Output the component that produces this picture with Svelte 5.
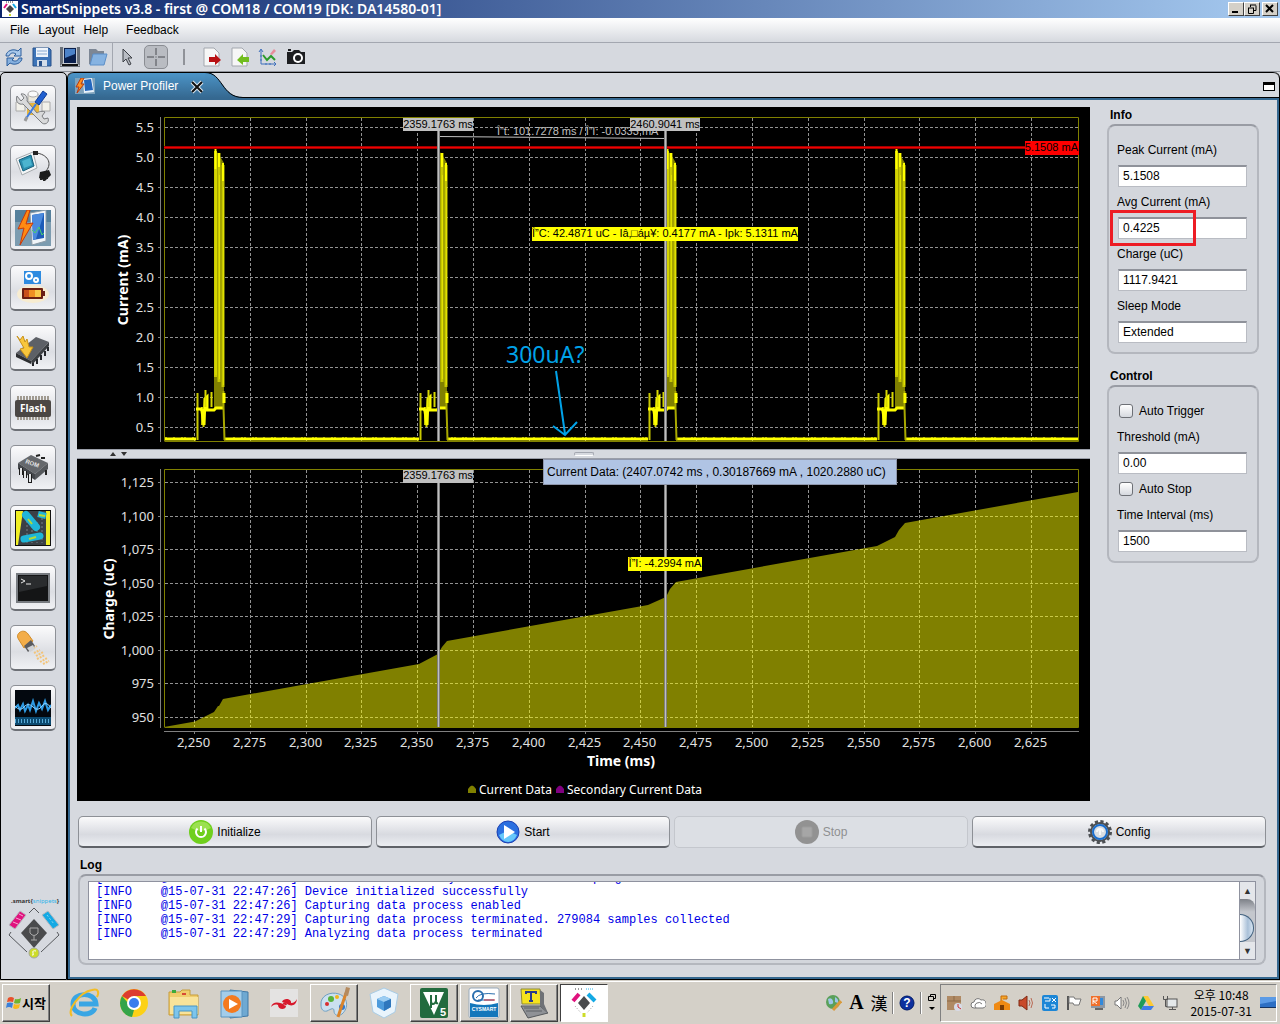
<script lang="ts">
    type Field = { id: string; label: string; value: string };

    const menus = ["File", "Layout", "Help"];
    const tools = ["refresh", "save", "screen", "folder"];
    const chartTools = ["cursor", "crosshair", "line", "export", "import", "axes", "camera"];
    const views = ["settings", "board", "profiler", "battery", "program", "flash", "rom", "cables", "terminal", "usb", "signal"];

    const infoFields: Field[] = [
        { id: "peak", label: "Peak Current (mA)", value: "5.1508" },
        { id: "avg", label: "Avg Current (mA)", value: "0.4225" },
        { id: "charge", label: "Charge (uC)", value: "1117.9421" },
        { id: "sleep", label: "Sleep Mode", value: "Extended" },
    ];

    const actions = [
        { icon: "power", label: "Initialize", disabled: false },
        { icon: "play", label: "Start", disabled: false },
        { icon: "stop", label: "Stop", disabled: true },
        { icon: "gear", label: "Config", disabled: false },
    ];

    const logLines = [
        "[INFO    @15-07-31 22:47:25] Device initialized by the board default program",
        "[INFO    @15-07-31 22:47:26] Device initialized successfully",
        "[INFO    @15-07-31 22:47:26] Capturing data process enabled",
        "[INFO    @15-07-31 22:47:29] Capturing data process terminated. 279084 samples collected",
        "[INFO    @15-07-31 22:47:29] Analyzing data process terminated",
    ];

    const apps = [
        { name: "ie", open: false },
        { name: "chrome", open: false },
        { name: "explorer", open: false },
        { name: "media", open: false },
        { name: "silabs", open: false },
        { name: "paint", open: true },
        { name: "cube", open: false },
        { name: "uvision", open: true },
        { name: "cysmart", open: true },
        { name: "teraterm", open: true },
        { name: "snippets", open: true },
    ];
    const tray = ["package", "cloud", "school", "speaker", "transfer", "flag", "monitor", "volume", "drive", "network"];

    // Time axis, shared by both charts
    const times = Array.from({ length: 16 }, (_, i) => 2250 + i * 25);
    const timeX = (t: number) => Math.round(117 + (t - 2250) * 2.232) + 0.5;

    const currents = Array.from({ length: 11 }, (_, i) => 0.5 + i * 0.5);
    const currentY = (v: number) => Math.round(50 + (5 - v) * 60.1) + 0.5;

    const charges = Array.from({ length: 8 }, (_, i) => 950 + i * 25);
    const chargeY = (v: number) => Math.round(23 + (1125 - v) * 1.343) + 0.5;

    const markers = [
        { x: 361, label: "2359.1763 ms" },
        { x: 588, label: "2460.9041 ms" },
    ];

    // Left edge of each radio event
    const pulses = [119, 342, 571, 800];

    // Small ticks on the sleep current floor
    const floorNoise = Array.from({ length: 150 }, (_, i) => 88 + i * 6 + ((i * 7) % 5)).filter(
        (x) => !pulses.some((p) => x > p - 2 && x < p + 30)
    );

    const floorPath = (() => {
        let path = "M88 332";
        for (const p of pulses) {
            path += `H${p}M${p + 28} 332`;
        }
        return path + "H1001";
    })();

    const chargeArea =
        "M87 268L118 262.500L137 253L141 247L142 247L146 240L342 205L361 195L365 188L370 182L571 146L589 138L593 130L599 123L800 87L818 78L822 71L828 64L1001 33V268Z";

    let autoTrigger = false;
    let autoStop = false;
    let threshold = "0.00";
    let interval = "1500";
</script>

{#snippet toolIcon(name: string)}
    <svg width="20" height="20" viewBox="0 0 20 20" aria-hidden="true">
        {#if name === "refresh"}
            <path d="M2 9C2 4 9 1 14 4L17 1V9H10L12 7C9 5 6 6 5 9Z" fill="#a9c8ea" stroke="#2c5f9e" />
            <path d="M18 11C18 16 11 19 6 16L3 19V11H10L8 13C11 15 14 14 15 11Z" fill="#86b0de" stroke="#2c5f9e" />
        {:else if name === "save"}
            <path d="M1 1H17L19 3V19H1Z" fill="#3d74b8" stroke="#27508a" />
            <rect x="4" y="1" width="12" height="9" fill="#eef4fb" />
            <path d="M5 4H15M5 7H15" stroke="#86a9d2" />
            <rect x="5" y="13" width="10" height="6" fill="#d4dde9" />
            <rect x="7" y="14" width="3" height="5" fill="#27508a" />
        {:else if name === "screen"}
            <rect x="0" y="0" width="20" height="20" fill="#6b717a" />
            <path d="M3 0H17V16L20 19H0L3 16Z" fill="#c7ccd3" />
            <rect x="4" y="1" width="12" height="15" fill="#0a1f4c" />
            <path d="M5 2H15V7L5 11Z" fill="#4c82c8" />
            <path d="M2 18H18" stroke="#111" stroke-width="2" />
        {:else if name === "folder"}
            <path d="M1 2H8L10 4H16V17H1Z" fill="#7d8795" />
            <path d="M5 7H19L16 18H2Z" fill="#86b3e2" stroke="#5c8fc8" />
        {:else if name === "cursor"}
            <path d="M5 2V15L8 12L11 18L13 17L10 11H14Z" fill="#b9bdc4" stroke="#3b3e44" />
        {:else if name === "crosshair"}
            <path d="M10 1V8M10 12V19M1 10H8M12 10H19M10 9.500V10.500" stroke="#4a4d53" />
        {:else if name === "line"}
            <path d="M10 2V18" stroke="#4a4d53" />
        {:else if name === "export"}
            <path d="M2 1H12L17 6V19H2Z" fill="#f6f6f6" stroke="#a3a7ae" />
            <path d="M7 10H13V7L19 13L13 18V15H7Z" fill="#b80f12" />
        {:else if name === "import"}
            <path d="M2 1H12L17 6V19H2Z" fill="#f6f6f6" stroke="#a3a7ae" />
            <path d="M19 10H13V7L7 13L13 18V15H19Z" fill="#71bd1e" />
        {:else if name === "axes"}
            <path d="M3 3V17H18M1 5L3 2L5 5M16 15L18 17L16 19M2 9H4M2 13H4M8 16V18M12 16V18" fill="none" stroke="#3f70bb" />
            <path d="M5 8L9 13L13 9L17 13" fill="none" stroke="#2b9b2b" stroke-width="2" />
            <path d="M12 7L16 2L18 4L14 8Z" fill="#e88b9a" />
        {:else if name === "camera"}
            <path d="M1 5H6L8 3H13L15 5H19V17H1Z" fill="#1d1e21" />
            <circle cx="12" cy="11" r="5" fill="#fff" />
            <circle cx="12" cy="11" r="3" fill="#1d1e21" />
            <path d="M2 3H5M1 8H6" stroke="#1d1e21" stroke-width="2" />
        {/if}
    </svg>
{/snippet}

{#snippet viewIcon(name: string)}
    <svg width="36" height="36" viewBox="0 0 36 36" aria-hidden="true">
        {#if name === "settings"}
            <path d="M12 13H24V25H12Z" fill="#e7b63d" />
            <path d="M13 4V12H23V4" fill="#ece9dc" stroke="#aaa" />
            <ellipse cx="18" cy="4" rx="5" ry="3" fill="#fafafa" stroke="#aaa" />
            <path d="M1 12H10V21H1ZM27 12H35V21H27Z" fill="#f2f1ea" stroke="#aaa" />
            <path d="M2 6C0 12 4 15 8 14L26 32C29 36 35 33 33 28L29 29L27 26L30 22C26 20 22 23 22 23L12 11C13 7 10 3 6 4L9 8L6 11Z" fill="#d9dadb" stroke="#7b7d80" />
            <path d="M28 1L32 4L24 15L20 12Z" fill="#1f5fd0" stroke="#0d3c96" />
            <path d="M21 14L10 30" stroke="#3c7be0" stroke-width="2" />
            <path d="M12 27L10 31" stroke="#999" stroke-width="3" />
        {:else if name === "board"}
            <path d="M1 9L18 2L22 18L7 25Z" fill="#f3f5f6" stroke="#a5aaae" />
            <path d="M4 10L16 5L19 16L8 21Z" fill="#2b8fb0" stroke="#15607c" />
            <path d="M7 11L15 8L17 15L9 18Z" fill="#4cb4cf" />
            <path d="M21 3C32 4 38 13 31 21" fill="none" stroke="#444" />
            <path d="M18 1H23V5H18Z" fill="#222" />
            <path d="M25 22L34 20L36 25L30 31L24 28Z" fill="#1b1b1b" />
            <path d="M26 28V30M29 29V31M32 27V29" stroke="#222" stroke-width="2" />
        {:else if name === "profiler"}
            <rect x="0" y="0" width="36" height="36" fill="#7c9cb0" />
            <rect x="0" y="0" width="36" height="12" fill="#55809c" />
            <path d="M15 3L31 0L31 31L17 35Z" fill="#f1f5f8" stroke="#8b9aa6" />
            <path d="M17 5L29 3L29 28L18 30Z" fill="#1d5cb8" />
            <path d="M17 5L29 3L21 29L18 30Z" fill="#4a8add" />
            <path d="M17 20L20 23L24 17L27 25L29 23" fill="none" stroke="#4ad36a" />
            <path d="M12 0L3 19L9 18L5 35L18 13L11 14L15 0Z" fill="#ff8a13" stroke="#c8390c" />
        {:else if name === "battery"}
            <rect x="9" y="1" width="17" height="13" fill="#2e8be0" />
            <circle cx="14" cy="6" r="3" fill="none" stroke="#fff" stroke-width="2" />
            <circle cx="21" cy="10" r="2" fill="none" stroke="#fff" stroke-width="2" />
            <ellipse cx="18" cy="24" rx="16" ry="9" fill="#f7ecd0" />
            <rect x="7" y="18" width="21" height="11" rx="1" fill="#6b1f13" />
            <rect x="9" y="20" width="5" height="7" fill="#c9501b" />
            <rect x="14" y="20" width="6" height="7" fill="#ef8f24" />
            <rect x="20" y="20" width="6" height="7" fill="#f8c84a" />
            <rect x="28" y="21" width="2" height="5" fill="#6b1f13" />
        {:else if name === "program"}
            <path d="M1 23L21 7L34 12L16 31Z" fill="#5d6066" />
            <path d="M1 23L16 31V34L1 27Z" fill="#2c2e31" />
            <path d="M16 31L34 12V16L17 35Z" fill="#3d4044" />
            <path d="M18 33V36M22 29V34M26 25V30M30 21V26M33 17V21" stroke="#24262a" stroke-width="2" />
            <path d="M2 6L5 10L8 6L10 12L12 9L14 17L18 17L12 28L5 19L9 18Z" fill="#f8c63c" stroke="#c9921a" />
        {:else if name === "flash"}
            <path d="M2 8H34M2 28H34" stroke="#a09a90" stroke-width="4" stroke-dasharray="2 1" />
            <rect x="0" y="10" width="36" height="17" rx="2" fill="#4b4744" />
            <text x="18" y="22" text-anchor="middle" class="flash-text">Flash</text>
        {:else if name === "rom"}
            <path d="M3 13L16 5L33 13L20 24Z" fill="#65686c" />
            <path d="M3 13L20 24V30L3 19Z" fill="#44474b" />
            <path d="M20 24L33 13V19L20 30Z" fill="#55585c" />
            <path d="M6 18V25M10 21V28M15 24V33" stroke="#1c1c1c" stroke-width="4" />
            <path d="M6 18V25M10 21V28M15 24V32" stroke="#e4e6e8" stroke-width="2" />
            <path d="M21 6L25 5M26 8L30 8M31 20V25" stroke="#222" stroke-width="2" />
            <text x="10" y="13" transform="rotate(20 10 13)" class="rom-text">ROM</text>
        {:else if name === "cables"}
            <rect x="0" y="0" width="36" height="36" fill="#111" />
            <rect x="1" y="1" width="34" height="34" fill="#f0ee25" />
            <path d="M8 1H31V35H3Z" fill="#3b4046" />
            <path d="M12 3V33M17 8V33M22 12V33M27 4V33" stroke="#777f87" stroke-dasharray="2 2" />
            <path d="M11 5L21 17" stroke="#1fb6d8" stroke-width="8" stroke-linecap="round" />
            <path d="M23 4L31 6" stroke="#1fb6d8" stroke-width="6" />
            <path d="M9 29L25 26" stroke="#1fb6d8" stroke-width="7" stroke-linecap="round" />
            <path d="M13 9L17 14M24 5L30 6M14 29L21 27" stroke="#b6d936" stroke-width="2" />
        {:else if name === "terminal"}
            <rect x="1" y="3" width="34" height="30" fill="#777b80" />
            <rect x="3" y="5" width="30" height="26" fill="#141516" />
            <path d="M4 6H32V16L4 22Z" fill="#2a2c2e" />
            <path d="M6 9L10 11L6 13M11 14H16" fill="none" stroke="#e8e8e8" />
        {:else if name === "usb"}
            <path d="M16 20L22 16M19 23L25 20M21 26L28 22M22 29L30 25M25 32L32 28M28 34L34 31" stroke="#f3c479" stroke-width="2" stroke-dasharray="2 1" />
            <path d="M4 3C7 0 11 1 13 4L18 11L9 18L4 10C2 7 2 5 4 3Z" fill="#f3ad48" stroke="#d08c2a" />
            <path d="M9 16L16 10L20 16L13 22Z" fill="#5b5c5f" />
            <path d="M12 18L18 15L20 19L15 22Z" fill="#d0d2d4" />
        {:else if name === "signal"}
            <rect x="0" y="0" width="36" height="36" fill="#03080f" />
            <rect x="0" y="27" width="36" height="8" fill="#0c4a70" />
            <path d="M0 31H36" stroke="#57a9d6" stroke-width="4" stroke-dasharray="1 2" />
            <path d="M0 18L3 15L5 20L8 14L10 21L13 15L15 20L18 11L21 21L24 13L27 19L30 11L33 20L36 15" fill="none" stroke="#2e9be4" stroke-width="2" />
            <path d="M0 16Q5 22 9 17T18 17T27 16T36 18" fill="none" stroke="#8fd2ff" />
        {/if}
    </svg>
{/snippet}

{#snippet actionIcon(name: string)}
    <svg width="24" height="24" viewBox="0 0 24 24" aria-hidden="true">
        {#if name === "power"}
            <circle cx="12" cy="12" r="12" fill="#6fcf1d" />
            <path d="M2 8A11 11 0 0 1 22 8Q12 14 2 8Z" fill="#9be050" />
            <path d="M8.500 8.500A5 5 0 1 0 15.500 8.500M12 6V12" fill="none" stroke="#fff" stroke-width="2" />
        {:else if name === "play"}
            <circle cx="12" cy="12" r="11" fill="#2a6fe0" stroke="#1c3fb0" />
            <path d="M3 15Q12 9 21 15Q18 22 12 22T3 15Z" fill="#66c8fa" />
            <path d="M8 5L19 12L8 19Z" fill="#fff" />
        {:else if name === "stop"}
            <circle cx="12" cy="12" r="12" fill="#929292" />
            <rect x="7" y="7" width="10" height="10" rx="1" fill="#a6a6a6" stroke="#9c9c9c" />
        {:else if name === "gear"}
            <circle cx="12" cy="12" r="10" fill="none" stroke="#4d5054" stroke-width="4" stroke-dasharray="3 2.240" />
            <circle cx="12" cy="12" r="9" fill="none" stroke="#4d5054" stroke-width="2" />
            <circle cx="12" cy="12" r="7" fill="#d9dde2" stroke="#1a6fd0" stroke-width="2" />
            <path d="M9 12A3 3 0 0 1 15 12M12 9V15" fill="none" stroke="#f6f8fa" stroke-width="2" />
        {/if}
    </svg>
{/snippet}

{#snippet appIcon(name: string)}
    <svg width="32" height="32" viewBox="0 0 32 32" aria-hidden="true">
        {#if name === "ie"}
            <path d="M27 21C24 30 5 29 5 17C5 5 27 4 28 17H11" fill="none" stroke="#3aa6e4" stroke-width="5" />
            <path d="M4 29C-2 24 12 5 24 3C31 1 31 6 29 10" fill="none" stroke="#f3bd24" stroke-width="2" />
        {:else if name === "chrome"}
            <circle cx="16" cy="16" r="14" fill="#fcd116" />
            <path d="M16 16L4 9A14 14 0 0 1 28 9H16Z" fill="#dd3b2e" />
            <path d="M4 9L16 23L14 30A14 14 0 0 1 4 9Z" fill="#35a449" />
            <circle cx="16" cy="16" r="7" fill="#fff" />
            <circle cx="16" cy="16" r="5" fill="#3b7ded" />
        {:else if name === "explorer"}
            <path d="M1 5H12L14 3H22V8H30V28H1Z" fill="#f0cd6c" stroke="#c79d3a" />
            <path d="M4 3H8V6H4Z" fill="#3cab3c" />
            <path d="M14 6H18V8H14Z" fill="#d84a35" />
            <path d="M2 10H30V27H2Z" fill="#f9e399" />
            <path d="M6 19H29V31H24V24H11V31H6Z" fill="#7dc5ec" stroke="#4995c4" />
        {:else if name === "media"}
            <path d="M12 3L30 5V29L12 31Z" fill="#6fa9d2" stroke="#4379a5" />
            <path d="M3 4H24V30H3Z" fill="#a3cdea" stroke="#5a94bf" />
            <circle cx="14" cy="17" r="9" fill="#f47a1f" />
            <path d="M11 12L20 17L11 22Z" fill="#fff" />
        {:else if name === "silabs"}
            <rect x="2" y="2" width="28" height="28" fill="#e4e3e2" />
            <path d="M3 20C5 13 13 16 17 18C20 19 20 16 14 15C16 10 24 12 23 16C26 16 28 14 29 12C28 20 22 19 19 17C15 14 13 17 18 19C18 23 10 23 10 18C7 17 5 18 3 20Z" fill="#d7192c" />
        {:else if name === "paint"}
            <path d="M3 18C2 9 12 4 21 7C30 10 31 21 24 27C20 30 16 28 16 24C16 20 13 22 9 24C5 25 3 22 3 18Z" fill="#cbe0ef" stroke="#6f9fc2" />
            <circle cx="9" cy="17" r="2" fill="#d92f2f" />
            <circle cx="13" cy="12" r="3" fill="#58b23b" />
            <circle cx="19" cy="10" r="2" fill="#f3b41c" />
            <circle cx="24" cy="20" r="3" fill="#2e78cf" />
            <path d="M28 6L20 30" stroke="#d9842c" stroke-width="3" />
            <path d="M26 8L28 0L32 1L30 9Z" fill="#b58a5e" />
        {:else if name === "cube"}
            <path d="M16 1L30 7L27 25L16 31L5 25L2 7Z" fill="#e9f4fc" stroke="#a9cce5" />
            <path d="M16 9L23 12V20L16 24L9 20V12Z" fill="#4d9bdc" />
            <path d="M9 12L16 15L23 12L16 9Z" fill="#9ccdf2" />
            <path d="M16 15V24L23 20V12Z" fill="#2f77bd" />
        {:else if name === "uvision"}
            <rect x="2" y="1" width="28" height="30" rx="2" fill="#226b3e" />
            <path d="M5 5H26L16 28Z" fill="#fff" />
            <path d="M13 8V14Q13 17 15 17T18 14V8M18 14Q18 17 20 16M13 15V21" fill="none" stroke="#226b3e" stroke-width="2" />
            <text x="22" y="29" class="app-digit">5</text>
        {:else if name === "cysmart"}
            <rect x="1" y="1" width="30" height="30" rx="2" fill="#fff" stroke="#9ab" />
            <path d="M2 16Q16 20 30 16V30H2Z" fill="#1477bb" />
            <ellipse cx="10" cy="9" rx="5" ry="5" fill="none" stroke="#2a6fae" stroke-width="2" />
            <path d="M8 11Q12 5 27 7M10 13H26" fill="none" stroke="#2a6fae" />
            <path d="M16 13H27" fill="none" stroke="#d7282f" />
            <text x="16" y="24" text-anchor="middle" class="app-name">CYSMART</text>
        {:else if name === "teraterm"}
            <path d="M3 2H22L23 17H4Z" fill="#f5e21d" stroke="#8d8a3a" />
            <path d="M8 7V5H18V7M13 5V14M11 14H15" fill="none" stroke="#2a3a8c" stroke-width="2" />
            <path d="M3 19H22L30 26L10 31Z" fill="#8f9296" stroke="#55585c" />
            <path d="M6 21H21M8 24H24" stroke="#5f6266" />
            <path d="M22 3L26 6V17L30 26L22 19Z" fill="#6f7276" />
        {:else if name === "snippets"}
            <path d="M7 2H15" stroke="#333" stroke-dasharray="1 2" />
            <path d="M18 2H26" stroke="#2bb4ea" stroke-dasharray="1 1" />
            <path d="M10 16L16 9L22 16L16 23Z" fill="#4a4b4d" />
            <path d="M5 14L11 7" stroke="#e0127e" stroke-width="4" />
            <path d="M20 7L27 14" stroke="#14a9e4" stroke-width="4" />
            <path d="M7 19L13 26M25 19L19 26" stroke="#999" stroke-dasharray="1 2" />
            <path d="M16 26V30" stroke="#cddc29" stroke-width="3" />
        {/if}
    </svg>
{/snippet}

{#snippet trayIcon(name: string)}
    <svg width="16" height="16" viewBox="0 0 16 16" aria-hidden="true">
        {#if name === "package"}
            <path d="M1 1H15V15H1Z" fill="#b08a64" />
            <path d="M1 6H15M8 1V6" stroke="#8d6a48" />
            <circle cx="12" cy="12" r="4" fill="#d8dbe8" />
            <path d="M12 9V12L15 14" fill="none" stroke="#c33" />
        {:else if name === "cloud"}
            <path d="M4 13A3 3 0 0 1 4 7A4 4 0 0 1 11 5A4 4 0 0 1 13 13Z" fill="#fff" stroke="#777" />
            <path d="M6 13A3 3 0 0 1 7 8A4 4 0 0 1 12 9" fill="none" stroke="#777" />
        {:else if name === "school"}
            <path d="M0 9L8 5L16 9V15H0Z" fill="#ef8a14" />
            <path d="M7 6V1H13V4H9" fill="#f6a72a" stroke="#c46b08" />
            <path d="M6 15V10H10V15Z" fill="#7a3c05" />
        {:else if name === "speaker"}
            <path d="M1 5H4L9 1V15L4 11H1Z" fill="#c94a2a" stroke="#7e2a14" />
            <path d="M11 5Q13 8 11 11M13 3Q16 8 13 13" fill="none" stroke="#b96a55" />
        {:else if name === "transfer"}
            <rect x="0" y="0" width="16" height="16" rx="2" fill="#1c86d6" />
            <path d="M2 3H7M3 6H8V3M10 3L14 7M14 3L10 7M3 9V13H7M9 10H13V13H10" fill="none" stroke="#fff" />
        {:else if name === "flag"}
            <path d="M2 1V15" stroke="#555" stroke-width="2" />
            <path d="M3 2H8L9 4H15L13 10H8L7 8H3Z" fill="#fff" stroke="#777" />
        {:else if name === "monitor"}
            <rect x="1" y="1" width="14" height="12" fill="#8e98a4" />
            <rect x="1" y="1" width="9" height="10" fill="#f0702c" />
            <path d="M10 3H13V10H10Z" fill="#3189dc" />
            <path d="M3 9V3H7V6H3L7 9" fill="none" stroke="#fff" />
            <path d="M5 14H13" stroke="#666" stroke-width="2" />
        {:else if name === "volume"}
            <path d="M1 6H3L7 2V14L3 10H1Z" fill="#fff" stroke="#777" />
            <path d="M9 5Q11 8 9 11M11 3Q14 8 11 13M13 2Q17 8 13 14" fill="none" stroke="#888" />
        {:else if name === "drive"}
            <path d="M5 1H10L16 11H11Z" fill="#fcc934" />
            <path d="M5 1L8 6L3 15L0 11Z" fill="#1f9c59" />
            <path d="M5 11H16L13 15H3Z" fill="#3f7de8" />
        {:else if name === "network"}
            <rect x="5" y="4" width="10" height="8" fill="#e4e8ea" stroke="#555" />
            <path d="M7 14.500H14M10.500 12V14" stroke="#555" />
            <path d="M1.500 1V4.500H5.500V1M3.500 5V11.500H5" fill="none" stroke="#555" />
        {/if}
    </svg>
{/snippet}

<div class="desktop">
    <header class="title-bar">
        <svg width="16" height="16" viewBox="0 0 16 16" aria-hidden="true">
            <rect width="16" height="16" fill="#fff" />
            <path d="M4 8L8 4L12 8L8 12Z" fill="#444" />
            <path d="M2 7L5 3" stroke="#e0127e" stroke-width="2" />
            <path d="M11 3L14 7" stroke="#14a9e4" stroke-width="2" />
            <path d="M8 13V15" stroke="#cddc29" stroke-width="2" />
            <path d="M4 1H12" stroke="#333" stroke-dasharray="1 1" />
        </svg>
        <h1>SmartSnippets v3.8 - first @ COM18 / COM19 [DK: DA14580-01]</h1>
        <div class="window-buttons">
            <button aria-label="Minimize">
                <svg width="12" height="10" viewBox="0 0 12 10"><path d="M2 8H8" stroke="#000" stroke-width="2" /></svg>
            </button>
            <button aria-label="Restore">
                <svg width="12" height="10" viewBox="0 0 12 10">
                    <path d="M4 1H10M4.500 1V3M10 1.500V6.500H8M2 4H8M2.500 4V9.500H7.500V4" fill="none" stroke="#000" />
                </svg>
            </button>
            <button aria-label="Close" class="close">
                <svg width="12" height="10" viewBox="0 0 12 10"><path d="M2 1L9 8M9 1L2 8" stroke="#000" stroke-width="2" /></svg>
            </button>
        </div>
    </header>

    <nav class="menu-bar">
        {#each menus as item}
            <button>{item}</button>
        {/each}
        <button class="feedback">Feedback</button>
    </nav>

    <div class="toolbar">
        {#each tools as name}
            <button aria-label={name}>{@render toolIcon(name)}</button>
        {/each}
        <span class="divider"></span>
        {#each chartTools as name}
            <button aria-label={name} class:pressed={name === "crosshair"}>{@render toolIcon(name)}</button>
        {/each}
    </div>

    <div class="main">
        <aside class="sidebar">
            {#each views as name}
                <button class="view" aria-label={name}>{@render viewIcon(name)}</button>
            {/each}
            <svg class="logo" width="54" height="64" viewBox="0 0 54 64" aria-hidden="true">
                <text x="4" y="8" class="logo-text">.smart&#123;<tspan class="logo-blue">snippets</tspan>&#125;</text>
                <path d="M27 24L40 38L27 53L14 38Z" fill="#4a4b4d" />
                <path d="M23 33H31V38Q27 43 23 38ZM27 41V45M24 45H30" fill="none" stroke="#aaa" />
                <path d="M2 30L13 16L19 20L8 34Z" fill="#e0127e" stroke="#b5b8be" />
                <path d="M6 27L11 29M9 23L14 25M12 19L16 21" stroke="#f9a5d0" />
                <path d="M35 20L41 16L52 30L46 34Z" fill="#14a9e4" stroke="#b5b8be" />
                <path d="M40 20L47 29" stroke="#86d8f6" stroke-dasharray="2 2" />
                <path d="M22 18L27 13L32 18M4 37L2 40L20 57M50 37L52 40L34 57" fill="none" stroke="#55585c" />
                <circle cx="27" cy="58" r="5" fill="#cddc29" stroke="#a5a8a0" />
                <path d="M29 56Q25 55 26 58T25 60" fill="none" stroke="#fff" />
            </svg>
        </aside>

        <main class="workspace">
            <div class="tabs">
                <div class="tab">
                    <svg width="20" height="16" viewBox="0 0 20 16" aria-hidden="true">
                        <rect width="20" height="16" fill="#7fa3bc" />
                        <path d="M8 1L17 0L19 14L9 15Z" fill="#e9f2fa" />
                        <path d="M9 2L16 1L18 12L10 13Z" fill="#2467bd" />
                        <path d="M6 0L1 9L4 9L2 15L9 6L6 6L9 0Z" fill="#ff9222" stroke="#b93a10" />
                    </svg>
                    <span>Power Profiler</span>
                    <button aria-label="Close tab">
                        <svg width="14" height="14" viewBox="0 0 14 14">
                            <path d="M2 2L12 12M12 2L2 12" stroke="#dce8f2" stroke-width="4" />
                            <path d="M2 2L12 12M12 2L2 12" stroke="#111" stroke-width="2" />
                        </svg>
                    </button>
                </div>
                <svg class="tab-end" width="40" height="26" viewBox="0 0 40 26" aria-hidden="true">
                    <defs>
                        <linearGradient id="tabFill" x2="0" y2="1">
                            <stop offset="0" stop-color="#4c95c8" />
                            <stop offset="1" stop-color="#356890" />
                        </linearGradient>
                    </defs>
                    <path d="M0 0C18 0 16 25 38 25V26H0Z" fill="url(#tabFill)" />
                    <path d="M0 .5C18 .5 16 25.500 38 25.500H40" fill="none" stroke="#000" />
                    <path d="M0 .5H40" stroke="#000" />
                </svg>
                <div class="tab-rest">
                    <button aria-label="Maximize panel"></button>
                </div>
            </div>

            <div class="content">
                <div class="upper">
                    <section class="charts">
                        <svg class="chart" viewBox="0 0 1013 342" role="img" aria-label="Current over time">
                            <g class="grid">
                                {#each times as t}
                                    <path d="M{timeX(t)} 11V334" />
                                {/each}
                                {#each currents as v}
                                    <path d="M88 {currentY(v)}H1001" />
                                {/each}
                            </g>
                            <path class="frame" d="M87.500 334V10.500H1001.500V334.500H87.500" />
                            <path class="axis" d="M83.500 10V335" />
                            {#each currents as v}
                                <path class="axis" d="M81 {currentY(v)}H84" />
                                <text x="77" y={currentY(v) + 4} text-anchor="end" class="tick">{v.toFixed(1)}</text>
                            {/each}
                            <text transform="translate(51 173) rotate(-90)" text-anchor="middle" class="axis-title">Current (mA)</text>

                            <path d={floorPath} stroke="#ff0" stroke-width="3" />
                            {#each floorNoise as x}
                                <rect {x} y="330" width="2" height="1" fill="#c8c800" />
                            {/each}
                            {#each pulses as x}
                                <g transform="translate({x} 0)" fill="none" stroke="#ff0">
                                    <path d="M18 44V302H28V56L22 46Z" fill="#808000" stroke="none" />
                                    <path d="M19.500 44V270M23 46V275M27 58V280" stroke="#c8c800" stroke-width="3" />
                                    <path d="M19.500 42V62M23 46V60M27 56V74" stroke-width="2" />
                                    <path d="M20 62V268M23.500 68V272M27.500 80V278" stroke="#e0e000" />
                                    <path d="M1.500 333V286M6 300V318M7.500 302V320" stroke="#c8c800" stroke-width="2" />
                                    <path d="M0 302H5L6 304L8 318L9 292L11 290V303H18L20 301H27" stroke-width="3" />
                                    <path d="M9.500 283V300M15.500 285V300" stroke-width="2" stroke="#d8d800" />
                                    <path d="M27.500 284V300L28.500 333" stroke="#a8a800" stroke-width="2" />
                                    <path d="M28 286V296" stroke-width="3" />
                                </g>
                            {/each}

                            <path d="M87 40.500H1001" stroke="#a00000" stroke-width="3" />
                            <path d="M87 40.500H1001" stroke="#f00000" />
                            <path d="M362 29.500L588 31.500" stroke="#c0c0c0" />
                            <text x="420" y="28" class="marker light">Î”t: 101.7278 ms / Î”I: -0.0333 mA</text>
                            {#each markers as mark}
                                <path d="M{mark.x + 0.5} 23V334" stroke="#808080" stroke-width="3" />
                                <path d="M{mark.x + 0.5} 23V334" stroke="#c0c0c0" />
                                <rect x={mark.x - 35} y="11" width="70" height="13" fill="#c0c0c0" />
                                <text x={mark.x} y="21" text-anchor="middle" class="marker">{mark.label}</text>
                            {/each}
                            <rect x="948" y="34" width="54" height="14" fill="#f00" />
                            <text x="1001" y="44" text-anchor="end" class="marker">5.1508 mA</text>
                            <rect x="455" y="120" width="266" height="14" fill="#ff0" />
                            <text x="588" y="130" text-anchor="middle" class="marker">Î”C: 42.4871 uC - Iâ‚□áµ¥: 0.4177 mA - Ipk: 5.1311 mA</text>

                            <text x="429" y="256" class="note">300uA?</text>
                            <path d="M479 264L488 327M476 319L488 328L500 315" fill="none" stroke="#00a2e8" stroke-width="2" />
                        </svg>

                        <div class="splitter">
                            <svg width="20" height="6" viewBox="0 0 20 6" aria-hidden="true">
                                <path d="M1 5L4 1L7 5ZM12 1H18L15 5Z" fill="#333" />
                            </svg>
                            <span class="grip"></span>
                        </div>

                        <svg class="chart" viewBox="0 0 1013 342" role="img" aria-label="Charge over time">
                            <g class="grid">
                                {#each times as t}
                                    <path d="M{timeX(t)} 11V268" />
                                {/each}
                                {#each charges as v}
                                    <path d="M88 {chargeY(v)}H1001" />
                                {/each}
                            </g>
                            <path d={chargeArea} fill="#ff0" fill-opacity="0.5" />
                            <path class="frame" d="M87.500 268V10.500H1001.500V268.500H87.500" />
                            <path class="axis" d="M83.500 10V269M87 272.500H1002" />
                            {#each charges as v}
                                <path class="axis" d="M81 {chargeY(v)}H84" />
                                <text x="77" y={chargeY(v) + 4} text-anchor="end" class="tick">{v.toLocaleString("en-US")}</text>
                            {/each}
                            {#each times as t}
                                <path class="axis" d="M{timeX(t)} 272V275" />
                                <text x={timeX(t) - 1} y="288" text-anchor="middle" class="tick">{t.toLocaleString("en-US")}</text>
                            {/each}
                            <text transform="translate(37 140) rotate(-90)" text-anchor="middle" class="axis-title">Charge (uC)</text>
                            <text x="544" y="307" text-anchor="middle" class="axis-title">Time (ms)</text>

                            {#each markers as mark}
                                <path d="M{mark.x + 0.5} 11V268" stroke="#808080" stroke-width="3" />
                                <path d="M{mark.x + 0.5} 11V268" stroke="#c0c0c0" />
                            {/each}
                            <rect x="326" y="11" width="70" height="13" fill="#c0c0c0" />
                            <text x="361" y="20" text-anchor="middle" class="marker">2359.1763 ms</text>
                            <rect x="551" y="98" width="74" height="14" fill="#ff0" />
                            <text x="588" y="108" text-anchor="middle" class="marker">Î”I: -4.2994 mA</text>

                            <path d="M391 334V330Q395 323 399 330V334Z" fill="#808000" />
                            <text x="402" y="335" class="legend">Current Data</text>
                            <path d="M479 334V330Q483 323 487 330V334Z" fill="#800080" />
                            <text x="490" y="335" class="legend">Secondary Current Data</text>
                        </svg>

                        <div class="tooltip">Current Data: (2407.0742 ms , 0.30187669 mA , 1020.2880 uC)</div>
                    </section>

                    <div class="side">
                        <h2>Info</h2>
                        <section class="group">
                            {#each infoFields as field}
                                <div class="field" class:highlight={field.id === "avg"}>
                                    <label for={field.id}>{field.label}</label>
                                    <input id={field.id} type="text" value={field.value} readonly />
                                </div>
                            {/each}
                        </section>

                        <h2 class="spaced">Control</h2>
                        <section class="group">
                            <label class="check"><input type="checkbox" bind:checked={autoTrigger} />Auto Trigger</label>
                            <div class="field">
                                <label for="threshold">Threshold (mA)</label>
                                <input id="threshold" type="text" bind:value={threshold} />
                            </div>
                            <label class="check"><input type="checkbox" bind:checked={autoStop} />Auto Stop</label>
                            <div class="field">
                                <label for="interval">Time Interval (ms)</label>
                                <input id="interval" type="text" bind:value={interval} />
                            </div>
                        </section>
                    </div>
                </div>

                <div class="actions">
                    {#each actions as action}
                        <button disabled={action.disabled}>
                            {@render actionIcon(action.icon)}
                            {action.label}
                        </button>
                    {/each}
                </div>

                <h2>Log</h2>
                <section class="group log-group">
                    <div class="log">
                        <div class="lines" role="log">
                            {#each logLines as line}
                                <p>{line}</p>
                            {/each}
                        </div>
                        <div class="scrollbar">
                            <button aria-label="Scroll up">▲</button>
                            <div class="track"><span class="thumb"></span></div>
                            <button aria-label="Scroll down">▼</button>
                        </div>
                    </div>
                </section>
            </div>
        </main>
    </div>

    <footer class="taskbar">
        <button class="start">
            <svg width="16" height="16" viewBox="0 0 16 16" aria-hidden="true">
                <path d="M2 3Q5 1 8 3L7 7Q4 6 1 7Z" fill="#e8502b" />
                <path d="M9 4Q12 5 15 3L14 8Q11 9 8 8Z" fill="#6fb52c" />
                <path d="M1 8Q4 7 7 8L6 13Q3 11 0 13Z" fill="#3a80d9" />
                <path d="M8 9Q11 10 14 9L13 13Q9 15 7 13Z" fill="#f6b91c" />
            </svg>
            시작
        </button>
        <div class="apps">
            {#each apps as app}
                <button aria-label={app.name} class:open={app.open} class:current={app.name === "snippets"}>
                    {@render appIcon(app.name)}
                </button>
            {/each}
        </div>
        <div class="language">
            <svg width="16" height="16" viewBox="0 0 16 16" aria-hidden="true">
                <circle cx="7" cy="7" r="7" fill="#5aa05a" />
                <path d="M2 4Q6 2 7 6T3 9ZM9 2Q13 4 12 8L9 7Z" fill="#9dc6e8" />
                <path d="M15 6L7 15" stroke="#d99a3a" stroke-width="3" />
            </svg>
            <span class="latin">A</span>
            <span class="hanja">漢</span>
            <span class="bar"></span>
            <svg width="16" height="16" viewBox="0 0 16 16" aria-hidden="true">
                <circle cx="8" cy="8" r="7" fill="#0c2f9e" stroke="#001a66" />
                <text x="8" y="12" text-anchor="middle" class="help">?</text>
            </svg>
            <span class="bar"></span>
            <svg width="10" height="20" viewBox="0 0 10 20" aria-hidden="true">
                <path d="M3.500 4V1.500H8.500V5.500H6M1.500 3.500H6.500V7.500H1.500Z" fill="none" stroke="#000" />
                <path d="M2 14H8L5 17Z" />
            </svg>
        </div>
        <div class="tray">
            {#each tray as name}
                {@render trayIcon(name)}
            {/each}
            <div class="clock">
                <span>오후 10:48</span>
                <span>2015-07-31</span>
            </div>
            <svg width="16" height="16" viewBox="0 0 16 16" aria-hidden="true">
                <rect x="0" y="2" width="16" height="11" fill="#2d6fc4" />
                <path d="M0 2H16V6L0 9Z" fill="#5c9be6" />
                <path d="M0 12.500H16" stroke="#16335f" />
            </svg>
        </div>
    </footer>
</div>

<style>
    :global(body) {
        margin: 0;
    }

    .desktop {
        display: flex;
        flex-direction: column;
        min-height: 100vh;
        background: #d6d9df;
        color: #000;
        font: 12px/14px "Liberation Sans", Arial, sans-serif;
    }

    button {
        display: flex;
        align-items: center;
        justify-content: center;
        margin: 0;
        padding: 0;
        border: 0;
        background: none;
        color: inherit;
        font: inherit;
    }

    svg {
        flex-shrink: 0;
    }

    h1,
    h2,
    p {
        margin: 0;
    }

    /* Window title and menus */
    .title-bar {
        display: flex;
        align-items: center;
        gap: 3px;
        height: 18px;
        padding: 0 2px;
        background: linear-gradient(to right, #0a246a, #a6caf0);
    }

    .title-bar h1 {
        flex: 1;
        color: #fff;
        font: 600 14px/16px "Noto Sans", sans-serif;
    }

    .window-buttons {
        display: flex;
    }

    .window-buttons button {
        box-sizing: border-box;
        width: 16px;
        height: 14px;
        border: 1px solid;
        border-color: #fff #404040 #404040 #fff;
        background: #d4d0c8;
    }

    .window-buttons .close {
        margin-left: 2px;
    }

    .menu-bar {
        display: flex;
        align-items: center;
        gap: 9px;
        height: 25px;
        padding: 0 10px;
        border-bottom: 1px solid #a3a7b0;
        background: linear-gradient(#fff, #d6d9df);
        box-sizing: border-box;
    }

    .menu-bar .feedback {
        margin-left: 9px;
    }

    .toolbar {
        display: flex;
        align-items: center;
        height: 29px;
        box-sizing: border-box;
        border-bottom: 1px solid #8f939b;
    }

    .toolbar button {
        box-sizing: border-box;
        width: 24px;
        height: 24px;
        margin: 0 2px;
    }

    .toolbar .pressed {
        border: 1px solid #8a8d93;
        border-radius: 5px;
        background: #b9bcc2;
    }

    .divider {
        align-self: stretch;
        width: 1px;
        margin-right: 1px;
        background: #a3a7b0;
    }

    .main {
        display: flex;
        flex: 1;
    }

    /* Left column of views */
    .sidebar {
        display: flex;
        flex-direction: column;
        gap: 14px;
        box-sizing: border-box;
        width: 67px;
        padding: 12px 0 20px 9px;
        border: 1px solid #000;
        border-radius: 5px 5px 0 0;
    }

    .view {
        box-sizing: border-box;
        width: 46px;
        height: 46px;
        border: 1px solid #8d9096;
        border-bottom: 2px solid #6d7076;
        border-radius: 5px;
        background: linear-gradient(#fbfbfc, #dcdee3 60%, #f0f1f4);
    }

    .logo {
        margin: auto 0 0 -3px;
    }

    .logo-text {
        font: bold 6px "Noto Sans", sans-serif;
        fill: #333;
    }

    .logo-blue {
        font-weight: normal;
        fill: #2bb4ea;
    }

    .flash-text {
        font: bold 10px "Open Sans", sans-serif;
        fill: #fff;
    }

    .rom-text {
        font: bold 6px "Liberation Sans", sans-serif;
        fill: #e8e8e8;
    }

    /* Power profiler panel */
    .workspace {
        display: flex;
        flex: 1;
        flex-direction: column;
        min-width: 0;
        border-right: 1px solid #000;
        border-bottom: 1px solid #000;
        border-left: 1px solid #000;
        border-radius: 6px 6px 0 0;
    }

    .tabs {
        display: flex;
        height: 26px;
    }

    .tab {
        display: flex;
        align-items: center;
        gap: 8px;
        padding-left: 7px;
        border-top: 1px solid #000;
        border-radius: 6px 0 0 0;
        background: linear-gradient(#4c95c8, #356890);
        color: #fff;
    }

    .tab button {
        margin: 2px 1px 0 4px;
    }

    .tab-rest {
        display: flex;
        flex: 1;
        align-items: center;
        justify-content: flex-end;
        padding-right: 4px;
        border-top: 1px solid #000;
        border-bottom: 1px solid #000;
        border-radius: 0 6px 0 0;
    }

    .tab-rest button {
        width: 12px;
        height: 9px;
        box-sizing: border-box;
        margin-top: 2px;
        border: 1px solid #000;
        border-top-width: 3px;
        background: #fff;
    }

    .content {
        flex: 1;
        padding: 7px 11px 12px 7px;
        border: 2px solid #356890;
    }

    .upper {
        display: flex;
        gap: 17px;
        padding-right: 7px;
    }

    .charts {
        position: relative;
        flex: 1;
        min-width: 0;
    }

    .chart {
        display: block;
        width: 100%;
        background: #000;
    }

    .grid path {
        stroke: #929292;
        stroke-dasharray: 3 2;
    }

    .frame {
        fill: none;
        stroke: #808000;
    }

    .axis {
        fill: none;
        stroke: #808080;
    }

    .tick {
        font: 13px "Noto Sans", sans-serif;
        fill: #e0e0e0;
    }

    .legend {
        font: 12px "Noto Sans", sans-serif;
        fill: #fff;
    }

    .axis-title {
        font: bold 14px "Noto Sans", sans-serif;
        fill: #fff;
    }

    .marker {
        font: 11px "Liberation Sans", Arial, sans-serif;
        fill: #000;
    }

    .light {
        fill: #c0c0c0;
    }

    .note {
        font: 23px "Noto Sans", sans-serif;
        fill: #00a2e8;
    }

    .splitter {
        display: flex;
        align-items: center;
        height: 10px;
        padding: 0 52px 0 32px;
        box-sizing: border-box;
        border-top: 1px solid #9a9ea8;
        border-bottom: 1px solid #9a9ea8;
    }

    .grip {
        width: 18px;
        height: 2px;
        margin: 0 auto;
        border: 1px solid #a3a7b0;
        border-bottom-color: #fff;
        border-radius: 2px;
    }

    .tooltip {
        position: absolute;
        top: 352px;
        left: 46%;
        padding: 5px 10px 4px 3px;
        border: 1px solid #8f97ac;
        background: #b0c4e4;
        line-height: 15px;
        white-space: nowrap;
    }

    /* Info and control groups */
    .side {
        width: 152px;
        padding-top: 1px;
    }

    h2 {
        padding-left: 3px;
        font-size: 12px;
        line-height: 14px;
    }

    .spaced {
        margin-top: 15px;
    }

    .group {
        box-sizing: border-box;
        margin-top: 2px;
        padding: 17px 10px 9px 8px;
        border: 2px solid #b4b7be;
        border-top-color: #999ca4;
        border-radius: 8px;
        background: #d3d6dc;
    }

    .field {
        position: relative;
        margin-bottom: 8px;
    }

    .field:last-child {
        margin-bottom: 0;
    }

    .field label {
        display: block;
    }

    .field input {
        display: block;
        box-sizing: border-box;
        width: 129px;
        height: 22px;
        margin: 8px 0 0 1px;
        padding: 0 4px 2px;
        border: 1px solid #b9bcc3;
        border-top: 2px solid #8f929a;
        background: #fff;
        color: #000;
        font: inherit;
    }

    .highlight::after {
        position: absolute;
        top: 15px;
        left: -7px;
        width: 80px;
        height: 30px;
        border: 3px solid #ed1c24;
        content: "";
    }

    .check {
        display: flex;
        align-items: center;
        gap: 6px;
        height: 14px;
        margin-bottom: 12px;
        padding-left: 2px;
    }

    .check input {
        width: 14px;
        height: 14px;
        margin: 0;
        box-sizing: border-box;
        border: 1px solid #6d7076;
        border-radius: 3px;
        background: linear-gradient(#fff, #d6d9df);
        appearance: none;
    }

    .actions {
        display: grid;
        grid-template-columns: repeat(4, 1fr);
        gap: 4px;
        margin: 15px 0 10px 1px;
    }

    .actions button {
        gap: 4px;
        height: 32px;
        box-sizing: border-box;
        border: 1px solid #8d9096;
        border-bottom: 2px solid #5f6268;
        border-radius: 5px;
        background: linear-gradient(#fafafb, #d8dae0 60%, #eceef2);
    }

    .actions button:disabled {
        border: 1px solid #c4c7cd;
        background: #dcdfe4;
        color: #8e8f91;
    }

    .log-group {
        margin-left: 1px;
        padding: 5px 8px 3px;
    }

    .log {
        display: flex;
        height: 79px;
        box-sizing: border-box;
        border: 1px solid #8f929f;
        background: #fff;
    }

    .lines {
        display: flex;
        flex: 1;
        flex-direction: column;
        justify-content: flex-end;
        overflow: hidden;
        padding: 0 7px 18px;
        color: #0000e6;
        font: 12px/14px "Liberation Mono", "Courier New", monospace;
        white-space: pre;
    }

    .scrollbar {
        display: flex;
        flex-direction: column;
        width: 15px;
        border-left: 1px solid #8f929f;
        background: #e4e6ea;
    }

    .scrollbar button {
        height: 17px;
        color: #333;
        font-size: 9px;
    }

    .track {
        display: flex;
        flex: 1;
        align-items: flex-end;
        overflow: hidden;
        border-radius: 0 8px 0 0;
        background: linear-gradient(#7d8188, #c4c7cd 30%);
    }

    .thumb {
        width: 14px;
        height: 28px;
        box-sizing: border-box;
        border: 1px solid #41617f;
        border-left: 0;
        border-radius: 0 14px 14px 0;
        background: linear-gradient(to right, #fff, #a9c0d8 60%, #d8e6f3);
    }

    /* System taskbar */
    .taskbar {
        display: flex;
        align-items: center;
        height: 44px;
        padding: 0 3px 0 2px;
        box-sizing: border-box;
        border-top: 1px solid #d4d0c8;
        background: #d4d0c8;
        box-shadow: inset 0 1px #fff;
    }

    .start,
    .apps button {
        box-sizing: border-box;
        width: 48px;
        height: 38px;
        border: 1px solid transparent;
    }

    .start {
        font: bold 13px "Noto Sans CJK KR", sans-serif;
    }

    .start,
    .apps .open {
        border-color: #fff #404040 #404040 #fff;
        box-shadow: inset -1px -1px #808080;
    }

    .apps {
        display: flex;
        gap: 2px;
        margin-left: 10px;
    }

    .apps .current {
        border-color: #404040 #fff #fff #404040;
        background: #fff;
        box-shadow: none;
    }

    .app-digit {
        font: bold 11px "Liberation Sans", sans-serif;
        fill: #fff;
    }

    .app-name {
        font: bold 5px "Liberation Sans", sans-serif;
        fill: #fff;
    }

    .language {
        display: flex;
        align-items: center;
        gap: 5px;
        margin: 0 3px 0 auto;
    }

    .latin {
        width: 18px;
        text-align: center;
        font: bold 20px "Liberation Serif", serif;
    }

    .hanja {
        font: 17px "Noto Sans CJK KR", sans-serif;
    }

    .bar {
        width: 1px;
        height: 22px;
        border-right: 1px solid #fff;
        background: #808080;
    }

    .help {
        font: bold 12px "Liberation Sans", sans-serif;
        fill: #fff;
    }

    .tray {
        display: flex;
        align-items: center;
        gap: 8px;
        height: 38px;
        padding-left: 5px;
        box-sizing: border-box;
        border: 1px solid;
        border-color: #808080 #fff #fff #808080;
    }

    .clock {
        display: flex;
        flex-direction: column;
        margin-left: 4px;
        text-align: center;
        font: 12px/16px "Noto Sans CJK KR", sans-serif;
    }
</style>
